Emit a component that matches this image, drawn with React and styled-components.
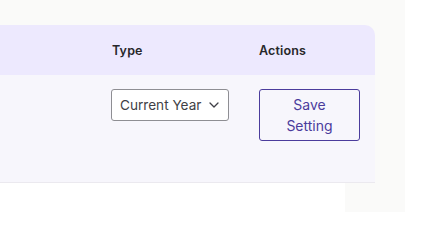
import React from 'react'
import styled, { createGlobalStyle } from 'styled-components'

const GlobalStyle = createGlobalStyle`
  html, body {
    margin: 0;
    padding: 0;
    background: #ffffff;
    font-family: Inter, "Noto Sans", sans-serif;
  }
`

const Page = styled.div`
  display: flex;
  width: 433px;
  height: 212px;
  overflow: hidden;
`

const Main = styled.main`
  width: 405px;
  padding-top: 25px;
  background: #fafaf9;
  display: flex;
  flex-direction: column;
`

const Table = styled.div`
  width: 375px;
  border-top-right-radius: 10px;
  overflow: hidden;
`

const Row = styled.div`
  display: grid;
  grid-template-columns: 96px 147px 132px;
  background: ${props => (props.head ? '#ede9fe' : '#f7f6fc')};
  height: ${props => (props.head ? '50px' : '108px')};
  align-items: ${props => (props.head ? 'center' : 'start')};
  border-bottom: ${props => (props.head ? 'none' : '1px solid #ebe9ef')};
  box-sizing: border-box;
`

const HeadCell = styled.div`
  padding: 0 16px;
  font-size: 12.5px;
  font-weight: 600;
  color: #27272a;
  letter-spacing: 0.15px;
`

const Cell = styled.div`
  padding: 14px 15px 0 15px;
  &:last-child {
    padding-left: 16px;
  }
`

const SelectBox = styled.div`
  display: flex;
  align-items: center;
  justify-content: space-between;
  width: 118px;
  height: 32px;
  box-sizing: border-box;
  padding: 0 9px 0 8px;
  background: #ffffff;
  border: 1px solid #8e8e93;
  border-radius: 3px;
  font-size: 13.6px;
  color: #3f3f46;
`

const SaveButton = styled.button`
  width: 101px;
  height: 52px;
  box-sizing: border-box;
  background: transparent;
  border: 1px solid #4b3c9c;
  border-radius: 3px;
  color: #4b3c9c;
  font-family: Inter, "Noto Sans", sans-serif;
  font-size: 14px;
  line-height: 21px;
  padding: 4px 18px;
  text-align: center;
`

const Below = styled.div`
  width: 345px;
  flex: 1;
  background: #ffffff;
`

const Chevron = () => (
  <svg width="10" height="6" viewBox="0 0 10 6" fill="none">
    <path d="M1 1l4 4 4-4" stroke="#3f3f46" strokeWidth="1.3" strokeLinecap="round" strokeLinejoin="round" />
  </svg>
)

export default function App() {
  return (
    <>
      <GlobalStyle />
      <Page>
        <Main>
          <Table>
            <Row head>
              <HeadCell />
              <HeadCell>Type</HeadCell>
              <HeadCell>Actions</HeadCell>
            </Row>
            <Row>
              <Cell />
              <Cell>
                <SelectBox>
                  <span>Current Year</span>
                  <Chevron />
                </SelectBox>
              </Cell>
              <Cell>
                <SaveButton>Save Setting</SaveButton>
              </Cell>
            </Row>
          </Table>
          <Below />
        </Main>
      </Page>
    </>
  )
}
